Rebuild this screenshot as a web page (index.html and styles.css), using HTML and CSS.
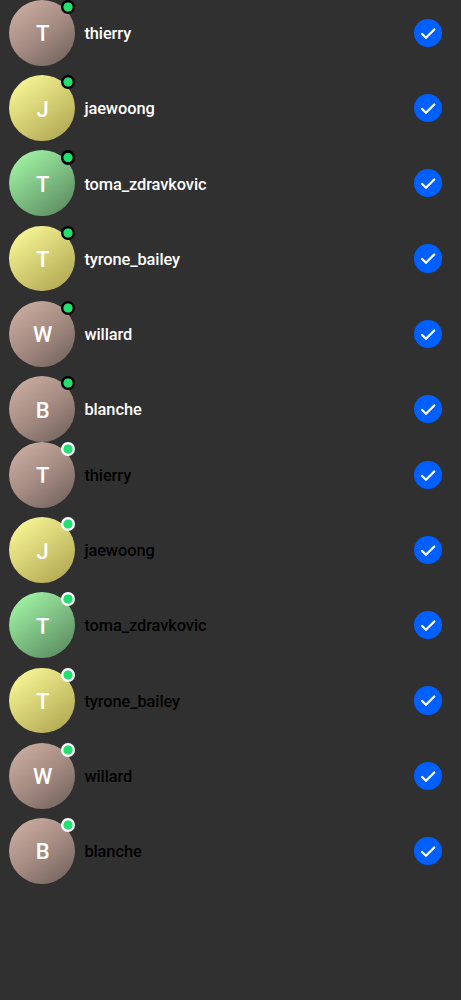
FILE: index.html
```html
<!DOCTYPE html>
<html lang="en">
<head>
<meta charset="utf-8">
<title>Users</title>
<link rel="stylesheet" href="styles.css">
</head>
<body>
<svg class="defs" width="0" height="0"><symbol id="check" viewBox="0 0 28 28"><path d="M8.1 14.9 L11.9 18.6 L20.1 10.4"/></symbol></svg>
<ul class="list dark">
<li class="row"><div class="avatar brown">T<span class="dot"></span></div><span class="name">thierry</span><svg class="check"><use href="#check"/></svg></li>
<li class="row"><div class="avatar yellow">J<span class="dot"></span></div><span class="name">jaewoong</span><svg class="check"><use href="#check"/></svg></li>
<li class="row"><div class="avatar green">T<span class="dot"></span></div><span class="name">toma_zdravkovic</span><svg class="check"><use href="#check"/></svg></li>
<li class="row"><div class="avatar yellow">T<span class="dot"></span></div><span class="name">tyrone_bailey</span><svg class="check"><use href="#check"/></svg></li>
<li class="row"><div class="avatar brown">W<span class="dot"></span></div><span class="name">willard</span><svg class="check"><use href="#check"/></svg></li>
<li class="row"><div class="avatar brown">B<span class="dot"></span></div><span class="name">blanche</span><svg class="check"><use href="#check"/></svg></li>
</ul>
<ul class="list light">
<li class="row"><div class="avatar brown">T<span class="dot"></span></div><span class="name">thierry</span><svg class="check"><use href="#check"/></svg></li>
<li class="row"><div class="avatar yellow">J<span class="dot"></span></div><span class="name">jaewoong</span><svg class="check"><use href="#check"/></svg></li>
<li class="row"><div class="avatar green">T<span class="dot"></span></div><span class="name">toma_zdravkovic</span><svg class="check"><use href="#check"/></svg></li>
<li class="row"><div class="avatar yellow">T<span class="dot"></span></div><span class="name">tyrone_bailey</span><svg class="check"><use href="#check"/></svg></li>
<li class="row"><div class="avatar brown">W<span class="dot"></span></div><span class="name">willard</span><svg class="check"><use href="#check"/></svg></li>
<li class="row"><div class="avatar brown">B<span class="dot"></span></div><span class="name">blanche</span><svg class="check"><use href="#check"/></svg></li>
</ul>
</body>
</html>
```
FILE: styles.css
```css
body {
  margin: 0;
  min-height: 1000px;
  background: #303030;
  font-family: Roboto, sans-serif;
  font-weight: 500;
}
.defs { display: block; height: 0; }
.list {
  display: flex;
  flex-direction: column;
  gap: 9.4px;
  margin: 0;
  padding: 0 18.8px 0 9.4px;
  list-style: none;
}
.row {
  display: flex;
  align-items: center;
  gap: 9.2px;
  height: 65.84px;
}
.avatar {
  position: relative;
  display: flex;
  align-items: center;
  justify-content: center;
  box-sizing: border-box;
  width: 65.8px;
  height: 65.8px;
  padding: 3px 0 0 0.6px;
  border-radius: 50%;
  color: #fff;
  font-size: 22px;
  line-height: 26px;
}
.brown { background: linear-gradient(143deg, #d3b3a7, #a1887f 55%, #6a5d57); }
.yellow { background: linear-gradient(143deg, #ffff9c, #aba04c); }
.green { background: linear-gradient(143deg, #a9ffad, #55825a); }
.dot {
  position: absolute;
  top: 0;
  right: 0;
  box-sizing: border-box;
  width: 14.1px;
  height: 14.1px;
  border-radius: 50%;
  background: radial-gradient(circle, #20e070 4.2px, var(--ring) 5px);
}
.name {
  flex: 1;
  padding-top: 2.4px;
  font-size: 16.4px;
  letter-spacing: -0.08px;
  line-height: 20px;
}
.dark { --ring: #000; }
.dark .name { color: #fff; }
.light { --ring: #fff; }
.light .name { color: #000; }
.check {
  width: 28.2px;
  height: 28.2px;
  border-radius: 50%;
  background: #005fff;
  fill: none;
  stroke: #fff;
  stroke-width: 2.3;
  stroke-linecap: round;
}
```
